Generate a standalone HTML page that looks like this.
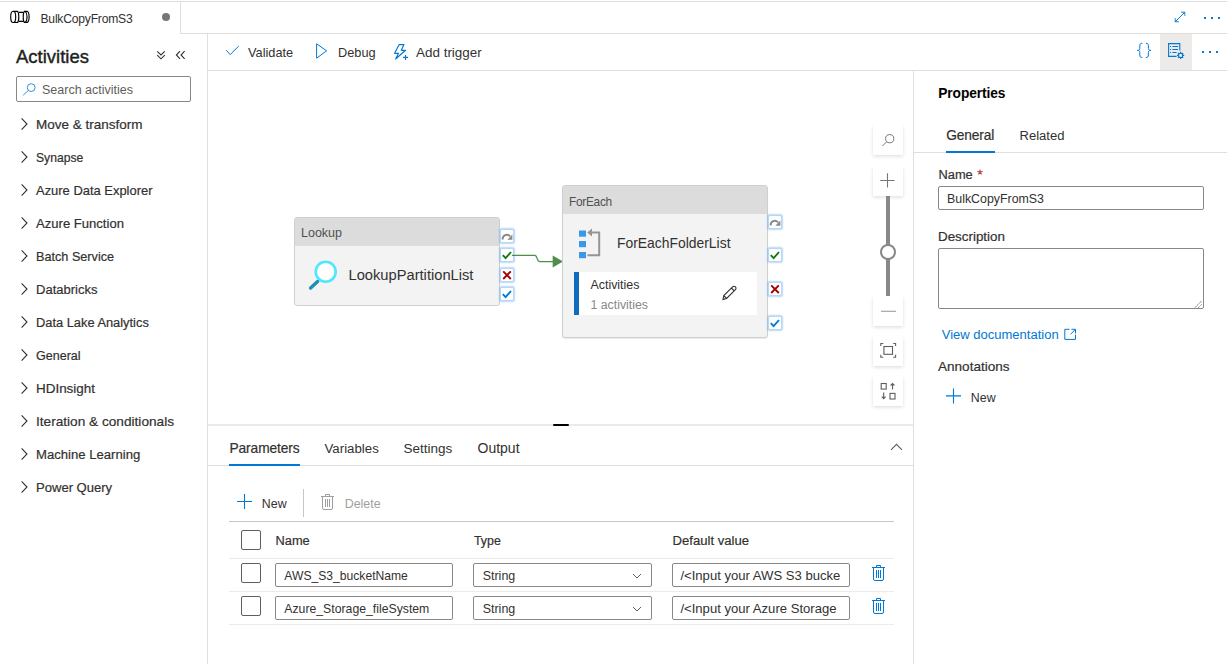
<!DOCTYPE html>
<html><head><meta charset="utf-8">
<style>
html,body{margin:0;padding:0;background:#fff;}
body{width:1227px;height:664px;position:relative;overflow:hidden;font-family:"Liberation Sans",sans-serif;color:#323130;}
.a{position:absolute;}
.t{position:absolute;line-height:1;white-space:nowrap;}
.b{font-weight:bold;}
.s{-webkit-text-stroke-width:0.2px;}
svg{position:absolute;overflow:visible;}
.sbx{width:12px;height:12px;border:1px solid #b5d8f7;border-radius:2px;background:#fff;box-shadow:0 0 1.5px 0.5px rgba(120,180,240,0.5);}
.cb{width:18px;height:18px;border:1px solid #605e5c;border-radius:2px;background:#fff;}
.inp{height:22px;border:1px solid #8a8886;border-radius:2px;background:#fff;}
.zb{width:30px;height:30px;background:#fff;box-shadow:0 1.6px 3.6px rgba(0,0,0,0.13),0 0.3px 0.9px rgba(0,0,0,0.1);}
</style></head><body>
<div class="a" style="left:0px;top:1px;width:1227px;height:1px;background:#e1dfdd"></div>
<div class="a" style="left:180px;top:1px;width:1px;height:33px;background:#e1dfdd"></div>
<div class="a" style="left:180px;top:33px;width:1047px;height:1px;background:#e1dfdd"></div>
<svg style="left:0px;top:0px;" width="40" height="34" viewBox="0 0 40 34"><g fill="none" stroke="#000" stroke-width="1.15">
<ellipse cx="13.2" cy="16.9" rx="2.5" ry="5.6"/>
<path d="M13.2 11.3 H17.6 C19.2 13 19.2 20.8 17.6 22.5 H13.2"/>
<path d="M18.9 12.4 H23.4 M18.9 21.4 H23.4"/>
<path d="M27.4 11.3 H24.4 C22.8 13 22.8 20.8 24.4 22.5 H27.4"/>
<path d="M27 11.3 C29.8 12.4 29.8 21.4 27 22.5"/>
<path d="M25.4 11.6 C27.6 13.4 27.6 20.4 25.4 22.2"/></g></svg>
<div class="t " style="left:40.5px;top:13.00px;font-size:12.13px;letter-spacing:-0.22px">BulkCopyFromS3</div>
<div class="a" style="left:162px;top:13px;width:8px;height:8px;border-radius:50%;background:#797775"></div>
<svg style="left:1170px;top:8px;" width="20" height="20" viewBox="0 0 20 20"><g fill="none" stroke="#0078d4" stroke-width="0.95"><path d="M5.2 13.8 L14.8 4.2 M11.2 4.2 H14.8 V7.8 M5.2 10.2 V13.8 H8.8"/></g></svg>
<div class="a" style="left:1204px;top:17px;width:2px;height:2px;background:#0078d4"></div>
<div class="a" style="left:1211px;top:17px;width:2px;height:2px;background:#0078d4"></div>
<div class="a" style="left:1218px;top:17px;width:2px;height:2px;background:#0078d4"></div>
<div class="a" style="left:207px;top:33px;width:1px;height:631px;background:#e1dfdd"></div>
<div class="t s" style="left:16px;top:48.00px;font-size:18.5px;color:#201f1e;-webkit-text-stroke-width:0.4px">Activities</div>
<svg style="left:150px;top:44px;" width="40" height="20" viewBox="0 0 40 20"><g fill="none" stroke="#323130" stroke-width="1.1">
<path d="M7.2 7.4 L11 11 L14.8 7.4 M7.2 11.2 L11 14.8 L14.8 11.2"/>
<path d="M30 7.2 L26.4 11 L30 14.8 M34.6 7.2 L31 11 L34.6 14.8"/></g></svg>
<div class="a" style="left:16px;top:76px;width:173px;height:24px;border:1px solid #8a8886;border-radius:2px"></div>
<svg style="left:18px;top:78px;" width="22" height="22" viewBox="0 0 22 22"><g fill="none" stroke="#0078d4" stroke-width="0.95" opacity="0.85"><circle cx="13.2" cy="9.6" r="3.9"/><path d="M10.4 12.4 L5.2 17.2"/></g></svg>
<div class="t " style="left:42px;top:84.00px;font-size:12.5px;color:#605e5c">Search activities</div>
<svg style="left:18px;top:115.7px;" width="14" height="16" viewBox="0 0 14 16"><path d="M3.6 2.4 L9 8 L3.6 13.6" fill="none" stroke="#323130" stroke-width="1.1"/></svg>
<div class="t s" style="left:36px;top:118.00px;font-size:13.5px;">Move &amp; transform</div>
<svg style="left:18px;top:148.7px;" width="14" height="16" viewBox="0 0 14 16"><path d="M3.6 2.4 L9 8 L3.6 13.6" fill="none" stroke="#323130" stroke-width="1.1"/></svg>
<div class="t s" style="left:36px;top:152.00px;font-size:12.15px;">Synapse</div>
<svg style="left:18px;top:181.7px;" width="14" height="16" viewBox="0 0 14 16"><path d="M3.6 2.4 L9 8 L3.6 13.6" fill="none" stroke="#323130" stroke-width="1.1"/></svg>
<div class="t s" style="left:36px;top:185.00px;font-size:12.95px;">Azure Data Explorer</div>
<svg style="left:18px;top:214.7px;" width="14" height="16" viewBox="0 0 14 16"><path d="M3.6 2.4 L9 8 L3.6 13.6" fill="none" stroke="#323130" stroke-width="1.1"/></svg>
<div class="t s" style="left:36px;top:217.00px;font-size:13.08px;">Azure Function</div>
<svg style="left:18px;top:247.7px;" width="14" height="16" viewBox="0 0 14 16"><path d="M3.6 2.4 L9 8 L3.6 13.6" fill="none" stroke="#323130" stroke-width="1.1"/></svg>
<div class="t s" style="left:36px;top:251.00px;font-size:12.66px;">Batch Service</div>
<svg style="left:18px;top:280.7px;" width="14" height="16" viewBox="0 0 14 16"><path d="M3.6 2.4 L9 8 L3.6 13.6" fill="none" stroke="#323130" stroke-width="1.1"/></svg>
<div class="t s" style="left:36px;top:283.00px;font-size:13.02px;">Databricks</div>
<svg style="left:18px;top:313.7px;" width="14" height="16" viewBox="0 0 14 16"><path d="M3.6 2.4 L9 8 L3.6 13.6" fill="none" stroke="#323130" stroke-width="1.1"/></svg>
<div class="t s" style="left:36px;top:317.00px;font-size:12.85px;">Data Lake Analytics</div>
<svg style="left:18px;top:346.7px;" width="14" height="16" viewBox="0 0 14 16"><path d="M3.6 2.4 L9 8 L3.6 13.6" fill="none" stroke="#323130" stroke-width="1.1"/></svg>
<div class="t s" style="left:36px;top:350.00px;font-size:12.54px;">General</div>
<svg style="left:18px;top:379.7px;" width="14" height="16" viewBox="0 0 14 16"><path d="M3.6 2.4 L9 8 L3.6 13.6" fill="none" stroke="#323130" stroke-width="1.1"/></svg>
<div class="t s" style="left:36px;top:382.00px;font-size:13.44px;">HDInsight</div>
<svg style="left:18px;top:412.7px;" width="14" height="16" viewBox="0 0 14 16"><path d="M3.6 2.4 L9 8 L3.6 13.6" fill="none" stroke="#323130" stroke-width="1.1"/></svg>
<div class="t s" style="left:36px;top:415.00px;font-size:13.65px;">Iteration &amp; conditionals</div>
<svg style="left:18px;top:445.7px;" width="14" height="16" viewBox="0 0 14 16"><path d="M3.6 2.4 L9 8 L3.6 13.6" fill="none" stroke="#323130" stroke-width="1.1"/></svg>
<div class="t s" style="left:36px;top:448.00px;font-size:13.12px;">Machine Learning</div>
<svg style="left:18px;top:478.7px;" width="14" height="16" viewBox="0 0 14 16"><path d="M3.6 2.4 L9 8 L3.6 13.6" fill="none" stroke="#323130" stroke-width="1.1"/></svg>
<div class="t s" style="left:36px;top:481.00px;font-size:13.06px;">Power Query</div>
<div class="a" style="left:208px;top:70px;width:1019px;height:1px;background:#e1dfdd"></div>
<svg style="left:220px;top:40px;" width="24" height="22" viewBox="0 0 24 22"><path d="M6.2 10.2 L10.2 14.6 L18.6 6.2" fill="none" stroke="#0078d4" stroke-width="1"/></svg>
<div class="t " style="left:248px;top:47.00px;font-size:12.75px;">Validate</div>
<svg style="left:310px;top:40px;" width="24" height="22" viewBox="0 0 24 22"><path d="M6.6 3.8 L16.6 10.8 L6.6 18.2 Z" fill="none" stroke="#0078d4" stroke-width="1"/></svg>
<div class="t " style="left:338px;top:47.00px;font-size:12.75px;">Debug</div>
<svg style="left:390px;top:40px;" width="24" height="22" viewBox="0 0 24 22"><g fill="none" stroke="#0078d4" stroke-width="1.15"><path d="M9.2 4.6 H14 L11.3 10.3 H15.6 L5.6 19 L8.6 13.3 H4.6 Z" stroke-linejoin="round"/><path d="M13 17.4 H18 M15.5 14.9 V19.9"/></g></svg>
<div class="t " style="left:416px;top:46.00px;font-size:13.45px;">Add trigger</div>
<svg style="left:1132px;top:40px;" width="24" height="22" viewBox="0 0 24 22"><g fill="none" stroke="#0078d4" stroke-width="1">
<path d="M10.3 3.3 C8.4 3.3 7.8 4 7.8 5.8 V8.4 C7.8 9.6 7.2 10.3 5.4 10.35 C7.2 10.4 7.8 11.1 7.8 12.3 V15 C7.8 16.8 8.4 17.5 10.3 17.5"/>
<path d="M13.9 3.3 C15.8 3.3 16.4 4 16.4 5.8 V8.4 C16.4 9.6 17 10.3 18.8 10.35 C17 10.4 16.4 11.1 16.4 12.3 V15 C16.4 16.8 15.8 17.5 13.9 17.5"/></g></svg>
<div class="a" style="left:1160px;top:34px;width:32px;height:36px;background:#edebe9"></div>
<svg style="left:1160px;top:34px;" width="32" height="36" viewBox="0 0 32 36"><g fill="none" stroke="#0078d4" stroke-width="1.1">
<path d="M16.6 22.4 H8.6 V9.6 H19.8 V16.4"/>
<path d="M12.4 12.5 H18.2 M12.4 15.5 H18 M12.4 18.5 H16.6"/>
<circle cx="20.6" cy="21.4" r="2.1"/></g>
<g stroke="#0078d4" stroke-width="1.2"><path d="M20.6 17.8 V19.2 M20.6 23.6 V25 M17 21.4 H18.4 M22.8 21.4 H24.2 M18.1 18.9 L19 19.8 M22.2 23 L23.1 23.9 M23.1 18.9 L22.2 19.8 M19 23 L18.1 23.9"/></g>
<g fill="#0078d4"><rect x="10.1" y="12" width="1" height="1"/><rect x="10.1" y="15" width="1" height="1"/><rect x="10.1" y="18" width="1" height="1"/></g></svg>
<div class="a" style="left:1202px;top:51px;width:2px;height:2px;background:#0078d4"></div>
<div class="a" style="left:1209px;top:51px;width:2px;height:2px;background:#0078d4"></div>
<div class="a" style="left:1216px;top:51px;width:2px;height:2px;background:#0078d4"></div>
<div class="a" style="left:208px;top:424px;width:705px;height:2px;background:#edebe9"></div>
<div class="a" style="left:553px;top:424px;width:16px;height:2px;border-radius:1px;background:#000"></div>
<div class="a" style="left:294px;top:217px;width:204px;height:87px;border:1px solid #cfcfcf;border-radius:3px;background:#f3f3f3;overflow:hidden"><div class="a" style="left:0;top:0;width:204px;height:28px;background:#dcdcdc"></div></div>
<div class="t " style="left:301px;top:227.00px;font-size:12.5px;color:#505050">Lookup</div>
<svg style="left:300px;top:252px;" width="40" height="42" viewBox="0 0 40 42"><circle cx="25.7" cy="19.7" r="10" fill="#fff" stroke="#50e6ff" stroke-width="2.6"/><path d="M10.6 36 L17.6 29.6" stroke="#1a8fb8" stroke-width="3.4" stroke-linecap="round"/></svg>
<div class="t " style="left:348.5px;top:268.00px;font-size:14.7px;">LookupPartitionList</div>
<div class="a sbx" style="left:500px;top:229px"></div>
<svg style="left:500px;top:229px;" width="14" height="14" viewBox="0 0 14 14"><path d="M2.6 10.4 C2.6 6.4 6.8 4.2 10.2 7.4" fill="none" stroke="#8a8886" stroke-width="1.9"/><path d="M12.4 5.6 V10.8 H7.4 Z" fill="#8a8886"/></svg>
<div class="a sbx" style="left:500px;top:248px"></div>
<svg style="left:500px;top:248px;" width="14" height="14" viewBox="0 0 14 14"><path d="M2.8 7.2 L5.6 10.2 L11 4" fill="none" stroke="#107c10" stroke-width="1.9"/></svg>
<div class="a sbx" style="left:500px;top:268px"></div>
<svg style="left:500px;top:268px;" width="14" height="14" viewBox="0 0 14 14"><path d="M3.2 3.4 L10.8 11 M10.8 3.4 L3.2 11" fill="none" stroke="#a80000" stroke-width="1.9"/></svg>
<div class="a sbx" style="left:500px;top:287px"></div>
<svg style="left:500px;top:287px;" width="14" height="14" viewBox="0 0 14 14"><path d="M2.8 7.2 L5.6 10.2 L11 4" fill="none" stroke="#0078d4" stroke-width="1.9"/></svg>
<svg style="left:500px;top:240px;" width="70" height="40" viewBox="0 0 70 40"><path d="M12 15.4 H34.8 C37.6 15.4 36.6 21.5 39.6 21.5 H53" fill="none" stroke="#4b8f4b" stroke-width="1.25"/><path d="M52.7 15.6 L63 21.5 L52.7 27.4 Z" fill="#4b8f4b"/></svg>
<div class="a" style="left:562px;top:185px;width:204px;height:151px;border:1px solid #cfcfcf;border-radius:3px;background:#f3f3f3;overflow:hidden;box-shadow:0 1px 1px rgba(0,0,0,0.08)"><div class="a" style="left:0;top:0;width:204px;height:28px;background:#dcdcdc"></div><div class="a" style="left:11px;top:86px;width:183px;height:43px;background:#fff"></div><div class="a" style="left:11px;top:86px;width:5px;height:43px;background:#0f6cbd"></div></div>
<div class="t " style="left:569px;top:197.00px;font-size:11.9px;color:#505050;letter-spacing:-0.3px">ForEach</div>
<svg style="left:575px;top:225px;" width="30" height="36" viewBox="0 0 30 36"><rect x="4" y="5.5" width="7" height="6.2" fill="#3999e8"/><rect x="4" y="16" width="7" height="6.2" fill="#3999e8"/><rect x="4" y="27" width="7" height="6.2" fill="#3999e8"/><path d="M15.5 7.6 H24.2 V30.2 H12.4" fill="none" stroke="#979593" stroke-width="2"/><path d="M12.2 7.6 L17 3.6 V11.6 Z" fill="#979593"/></svg>
<div class="t " style="left:617px;top:237.00px;font-size:13.9px;">ForEachFolderList</div>
<div class="t " style="left:590.5px;top:279.00px;font-size:12.4px;">Activities</div>
<div class="t " style="left:590.5px;top:299.00px;font-size:12.3px;color:#8a8886">1 activities</div>
<svg style="left:718px;top:283px;" width="22" height="20" viewBox="0 0 22 20"><path d="M5 16.5 L5.8 12.6 L14.6 3.8 C15.4 3 16.6 3 17.4 3.8 C18.2 4.6 18.2 5.8 17.4 6.6 L8.6 15.4 Z M13.4 5 L16.2 7.8 M5.8 12.6 L8.6 15.4" fill="none" stroke="#323130" stroke-width="1.1"/></svg>
<div class="a sbx" style="left:768px;top:215px"></div>
<svg style="left:768px;top:215px;" width="14" height="14" viewBox="0 0 14 14"><path d="M2.6 10.4 C2.6 6.4 6.8 4.2 10.2 7.4" fill="none" stroke="#8a8886" stroke-width="1.9"/><path d="M12.4 5.6 V10.8 H7.4 Z" fill="#8a8886"/></svg>
<div class="a sbx" style="left:768px;top:248px"></div>
<svg style="left:768px;top:248px;" width="14" height="14" viewBox="0 0 14 14"><path d="M2.8 7.2 L5.6 10.2 L11 4" fill="none" stroke="#107c10" stroke-width="1.9"/></svg>
<div class="a sbx" style="left:768px;top:282px"></div>
<svg style="left:768px;top:282px;" width="14" height="14" viewBox="0 0 14 14"><path d="M3.2 3.4 L10.8 11 M10.8 3.4 L3.2 11" fill="none" stroke="#a80000" stroke-width="1.9"/></svg>
<div class="a sbx" style="left:768px;top:316px"></div>
<svg style="left:768px;top:316px;" width="14" height="14" viewBox="0 0 14 14"><path d="M2.8 7.2 L5.6 10.2 L11 4" fill="none" stroke="#0078d4" stroke-width="1.9"/></svg>
<div class="a zb" style="left:873px;top:125px"></div>
<div class="a zb" style="left:873px;top:166px"></div>
<div class="a zb" style="left:873px;top:296px"></div>
<div class="a zb" style="left:873px;top:336px"></div>
<div class="a zb" style="left:873px;top:376px"></div>
<div class="a" style="left:886px;top:196px;width:4px;height:100px;background:#8a8886"></div>
<div class="a" style="left:880px;top:244px;width:12px;height:12px;border:2px solid #8a8886;border-radius:50%;background:#fff"></div>
<svg style="left:873px;top:125px;" width="30" height="30" viewBox="0 0 30 30"><circle cx="16.7" cy="13.7" r="4.1" fill="none" stroke="#797775" stroke-width="1"/><path d="M13.8 16.6 L9.4 21" stroke="#797775" stroke-width="1"/></svg>
<svg style="left:873px;top:166px;" width="30" height="30" viewBox="0 0 30 30"><path d="M7.2 14.5 H21.6 M14.5 7.2 V21.6" stroke="#797775" stroke-width="1.1"/></svg>
<svg style="left:873px;top:296px;" width="30" height="30" viewBox="0 0 30 30"><path d="M8 15.3 H23" stroke="#a19f9d" stroke-width="1.1"/></svg>
<svg style="left:873px;top:336px;" width="30" height="30" viewBox="0 0 30 30"><g fill="none" stroke="#605e5c" stroke-width="1.1"><rect x="10.9" y="10.5" width="8.6" height="7.8"/><path d="M7.8 10 V7.5 H10.3 M20.2 7.5 H22.6 V10 M22.6 18.8 V21.3 H20.2 M10.3 21.3 H7.8 V18.8"/></g></svg>
<svg style="left:873px;top:376px;" width="30" height="30" viewBox="0 0 30 30"><g fill="none" stroke="#605e5c" stroke-width="1.1"><rect x="8.2" y="7.5" width="5" height="5.6"/><rect x="17" y="17.4" width="5" height="5.6"/><path d="M19.5 13.4 V7.6 M17.6 9.5 L19.5 7.6 L21.4 9.5"/><path d="M10.7 16.6 V22.6 M8.8 20.7 L10.7 22.6 L12.6 20.7"/></g></svg>
<div class="t s" style="left:229.5px;top:442.00px;font-size:13.75px;letter-spacing:-0.1px">Parameters</div>
<div class="t " style="left:324.5px;top:442.00px;font-size:13.26px;">Variables</div>
<div class="t " style="left:403.5px;top:442.00px;font-size:13.5px;">Settings</div>
<div class="t " style="left:477.5px;top:441.00px;font-size:14.0px;">Output</div>
<div class="a" style="left:208px;top:465px;width:705px;height:1px;background:#e1dfdd"></div>
<div class="a" style="left:229px;top:464px;width:71px;height:2px;background:#0078d4"></div>
<svg style="left:880px;top:436px;" width="24" height="20" viewBox="0 0 24 20"><path d="M11 13.8 L16.5 8.3 L22 13.8" fill="none" stroke="#605e5c" stroke-width="1.1"/></svg>
<svg style="left:230px;top:488px;" width="30" height="30" viewBox="0 0 30 30"><path d="M7 13.5 H22 M14.5 6 V21" stroke="#0078d4" stroke-width="1.1"/></svg>
<div class="t " style="left:261.8px;top:498.00px;font-size:12.4px;">New</div>
<div class="a" style="left:303px;top:489px;width:1px;height:28px;background:#c8c6c4"></div>
<svg style="left:321px;top:494px;" width="14" height="17" viewBox="0 0 14 17"><g fill="none" stroke="#a19f9d" stroke-width="1"><path d="M0 2.5 H13"/><path d="M4.5 2 V0.5 H8.5 V2"/><path d="M1.5 2.5 V14 Q1.5 15.5 3 15.5 H10 Q11.5 15.5 11.5 14 V2.5"/><path d="M4.5 5 V13 M6.5 5 V13 M8.5 5 V13"/></g></svg>
<div class="t " style="left:344.7px;top:498.00px;font-size:12.45px;color:#a19f9d">Delete</div>
<div class="a" style="left:229px;top:521px;width:665px;height:1px;background:#c8c6c4"></div>
<div class="a cb" style="left:241px;top:530px"></div>
<div class="t s" style="left:275.5px;top:535.00px;font-size:12.82px;">Name</div>
<div class="t s" style="left:474px;top:535.00px;font-size:12.36px;">Type</div>
<div class="t s" style="left:672.5px;top:534.00px;font-size:13.12px;">Default value</div>
<div class="a" style="left:229px;top:558px;width:665px;height:1px;background:#edebe9"></div>
<div class="a cb" style="left:241px;top:563px"></div>
<div class="a inp" style="left:275px;top:563px;width:176px"></div>
<div class="t " style="left:284.3px;top:570.00px;font-size:12.13px;">AWS_S3_bucketName</div>
<div class="a inp" style="left:473px;top:563px;width:177px"></div>
<div class="t " style="left:482.7px;top:570.00px;font-size:12.48px;">String</div>
<svg style="left:627.2px;top:568px;" width="20" height="16" viewBox="0 0 20 16"><path d="M6 6 L10 10 L14 6" fill="none" stroke="#605e5c" stroke-width="1"/></svg>
<div class="a inp" style="left:672px;top:563px;width:176px"></div>
<div class="a" style="left:680px;top:563px;width:160px;height:24px;overflow:hidden">
<div class="t " style="left:0.4px;top:6.00px;font-size:13.1px;">/&lt;Input your AWS S3 bucketName&gt;</div>
</div>
<svg style="left:872px;top:565px;" width="14" height="17" viewBox="0 0 14 17"><g fill="none" stroke="#0078d4" stroke-width="1"><path d="M0 2.5 H13"/><path d="M4.5 2 V0.5 H8.5 V2"/><path d="M1.5 2.5 V14 Q1.5 15.5 3 15.5 H10 Q11.5 15.5 11.5 14 V2.5"/><path d="M4.5 5 V13 M6.5 5 V13 M8.5 5 V13"/></g></svg>
<div class="a" style="left:229px;top:591px;width:665px;height:1px;background:#edebe9"></div>
<div class="a cb" style="left:241px;top:596px"></div>
<div class="a inp" style="left:275px;top:596px;width:176px"></div>
<div class="t " style="left:284.3px;top:603.00px;font-size:12.25px;">Azure_Storage_fileSystem</div>
<div class="a inp" style="left:473px;top:596px;width:177px"></div>
<div class="t " style="left:482.7px;top:603.00px;font-size:12.48px;">String</div>
<svg style="left:627.2px;top:601px;" width="20" height="16" viewBox="0 0 20 16"><path d="M6 6 L10 10 L14 6" fill="none" stroke="#605e5c" stroke-width="1"/></svg>
<div class="a inp" style="left:672px;top:596px;width:176px"></div>
<div class="a" style="left:680px;top:596px;width:160px;height:24px;overflow:hidden">
<div class="t " style="left:0.4px;top:6.00px;font-size:13.1px;">/&lt;Input your Azure Storage fileSystem&gt;</div>
</div>
<svg style="left:872px;top:598px;" width="14" height="17" viewBox="0 0 14 17"><g fill="none" stroke="#0078d4" stroke-width="1"><path d="M0 2.5 H13"/><path d="M4.5 2 V0.5 H8.5 V2"/><path d="M1.5 2.5 V14 Q1.5 15.5 3 15.5 H10 Q11.5 15.5 11.5 14 V2.5"/><path d="M4.5 5 V13 M6.5 5 V13 M8.5 5 V13"/></g></svg>
<div class="a" style="left:229px;top:624px;width:665px;height:1px;background:#edebe9"></div>
<div class="a" style="left:913px;top:71px;width:1px;height:593px;background:#e1dfdd"></div>
<div class="t b" style="left:938.3px;top:87.00px;font-size:13.75px;color:#000;letter-spacing:-0.1px">Properties</div>
<div class="t s" style="left:946.2px;top:129.00px;font-size:13.75px;letter-spacing:-0.15px">General</div>
<div class="t " style="left:1019.5px;top:129.00px;font-size:13.06px;">Related</div>
<div class="a" style="left:914px;top:152px;width:313px;height:1px;background:#e1dfdd"></div>
<div class="a" style="left:946px;top:151px;width:49px;height:2px;background:#0078d4"></div>
<div class="t s" style="left:938.5px;top:169.00px;font-size:12.82px;">Name</div>
<svg style="left:975px;top:167px;" width="10" height="10" viewBox="0 0 10 10"><g stroke="#a4262c" stroke-width="1.1" opacity="0.85"><path d="M5 2.4 V5.2 M5 5.2 L2.4 4.4 M5 5.2 L7.6 4.4 M5 5.2 L3.4 7.4 M5 5.2 L6.6 7.4"/></g></svg>
<div class="a inp" style="left:938px;top:186px;width:264px"></div>
<div class="t " style="left:947px;top:193.00px;font-size:12.38px;">BulkCopyFromS3</div>
<div class="t s" style="left:938px;top:230.00px;font-size:13.39px;">Description</div>
<div class="a" style="left:938px;top:248px;width:264px;height:59px;border:1px solid #8a8886;border-radius:2px"></div>
<svg style="left:1190px;top:296px;" width="14" height="14" viewBox="0 0 14 14"><path d="M11.6 5 L4.8 11.8 M11.6 8.4 L8.2 11.8" stroke="#605e5c" stroke-width="0.9" stroke-dasharray="1.2 0.6"/></svg>
<div class="t " style="left:941.7px;top:328.00px;font-size:13.02px;color:#0078d4">View documentation</div>
<svg style="left:1060px;top:324px;" width="20" height="20" viewBox="0 0 20 20"><g fill="none" stroke="#0078d4" stroke-width="1"><path d="M9.5 5.3 H4.8 V15.4 H15.5 V10.6"/><path d="M11.4 5.3 H15.5 V9.4 M15.3 5.5 L10.6 10.2"/></g></svg>
<div class="t s" style="left:938px;top:360.00px;font-size:13.56px;">Annotations</div>
<svg style="left:938px;top:381px;" width="30" height="30" viewBox="0 0 30 30"><path d="M8 14.9 H23 M15.5 7.4 V22.4" stroke="#0078d4" stroke-width="1.1"/></svg>
<div class="t " style="left:970.8px;top:392.00px;font-size:12.4px;">New</div>
</body></html>
